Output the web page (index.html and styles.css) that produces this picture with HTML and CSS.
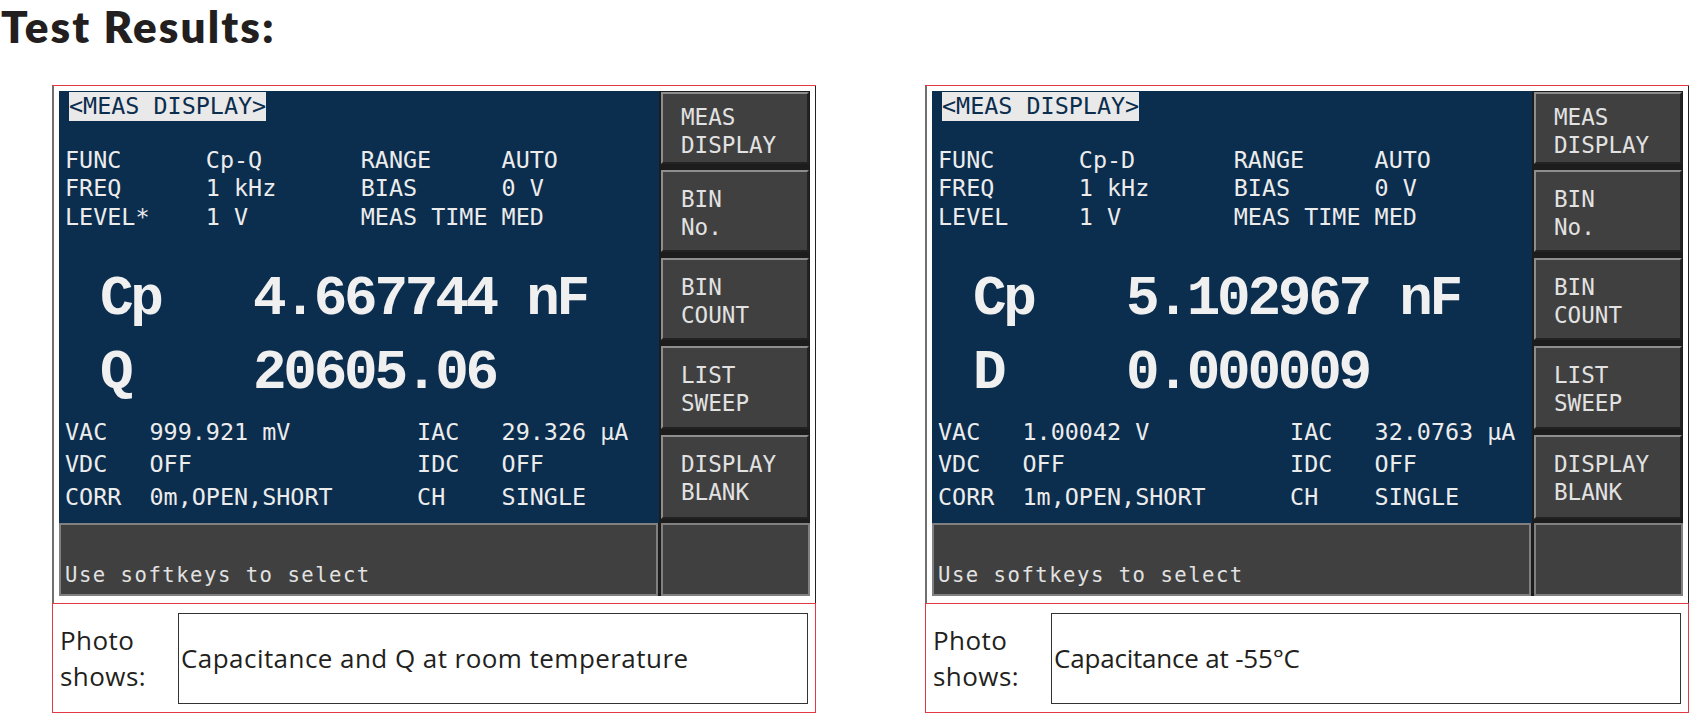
FILE: index.html
```html
<!DOCTYPE html>
<html>
<head>
<meta charset="utf-8">
<link rel="stylesheet" href="styles.css">
</head>
<body>
<h1 class="title">Test Results:</h1>
<div class="panels">
  <div class="panel">
    <div class="shot">
      <div class="screen">
        <div class="top">
          <div class="main">
            <div class="tag">&lt;MEAS DISPLAY&gt;</div>
<pre class="params">FUNC      Cp-Q       RANGE     AUTO
FREQ      1 kHz      BIAS      0 V
LEVEL*    1 V        MEAS TIME MED</pre>
            <div class="big">
              <div class="row"><span class="lbl">Cp</span><span class="val">4.667744 nF</span></div>
              <div class="row"><span class="lbl">Q</span><span class="val">20605.06</span></div>
            </div>
<pre class="info">VAC   999.921 mV         IAC   29.326 µA
VDC   OFF                IDC   OFF
CORR  0m,OPEN,SHORT      CH    SINGLE</pre>
          </div>
          <div class="keys">
            <div class="key">MEAS<br>DISPLAY</div>
            <div class="key">BIN<br>No.</div>
            <div class="key">BIN<br>COUNT</div>
            <div class="key">LIST<br>SWEEP</div>
            <div class="key">DISPLAY<br>BLANK</div>
          </div>
        </div>
        <div class="status">
          <div class="msg">Use softkeys to select</div>
          <div class="cell"></div>
        </div>
      </div>
    </div>
    <div class="caption">
      <div class="label">Photo<br>shows:</div>
      <div class="box">Capacitance and Q at room temperature</div>
    </div>
  </div>

  <div class="panel">
    <div class="shot">
      <div class="screen">
        <div class="top">
          <div class="main">
            <div class="tag">&lt;MEAS DISPLAY&gt;</div>
<pre class="params">FUNC      Cp-D       RANGE     AUTO
FREQ      1 kHz      BIAS      0 V
LEVEL     1 V        MEAS TIME MED</pre>
            <div class="big">
              <div class="row"><span class="lbl">Cp</span><span class="val">5.102967 nF</span></div>
              <div class="row"><span class="lbl">D</span><span class="val">0.000009</span></div>
            </div>
<pre class="info">VAC   1.00042 V          IAC   32.0763 µA
VDC   OFF                IDC   OFF
CORR  1m,OPEN,SHORT      CH    SINGLE</pre>
          </div>
          <div class="keys">
            <div class="key">MEAS<br>DISPLAY</div>
            <div class="key">BIN<br>No.</div>
            <div class="key">BIN<br>COUNT</div>
            <div class="key">LIST<br>SWEEP</div>
            <div class="key">DISPLAY<br>BLANK</div>
          </div>
        </div>
        <div class="status">
          <div class="msg">Use softkeys to select</div>
          <div class="cell"></div>
        </div>
      </div>
    </div>
    <div class="caption">
      <div class="label">Photo<br>shows:</div>
      <div class="box box-short">Capacitance at -55°C</div>
    </div>
  </div>
</div>
</body>
</html>
```

FILE: styles.css
```css
* { box-sizing: border-box; }
html, body { margin: 0; padding: 0; background: #ffffff; }
body { width: 1706px; height: 727px; overflow: hidden; }

.title {
  margin: 0;
  padding-left: 1px;
  height: 52px;
  font: 800 44px/52.8px "Lato", "Open Sans", sans-serif;
  letter-spacing: 2.1px;
  color: #231f20;
}

.panels {
  display: flex;
  gap: 109px;
  padding-left: 52px;
  margin-top: 33px;
}

.panel {
  width: 764px;
  border-top: 1px solid #e23a44;
}

.shot {
  border-left: 2px solid #707070;
  border-right: 1px solid #222222;
  padding: 5px 5px 7px 5px;
}

.screen {
  width: 751px;
  height: 505px;
  display: flex;
  flex-direction: column;
  background: #1c1c1c;
}

.top {
  height: 432px;
  display: flex;
}

.main {
  width: 600px;
  background: #0b2d4e;
  color: #ececec;
  padding: 1px 0 0 6px;
  font-family: "DejaVu Sans Mono", monospace;
}

.tag {
  width: max-content;
  margin-left: 4px;
  background: #e9e9e9;
  color: #0b2d4e;
  font-size: 23.4px;
  line-height: 29px;
}

.params, .info {
  margin: 0;
  font-family: "DejaVu Sans Mono", monospace;
  font-size: 23.4px;
}

.params {
  margin-top: 24.7px;
  line-height: 28.5px;
}

.big {
  margin-top: 30.6px;
  padding-left: 35px;
  font-family: "Liberation Mono", monospace;
  font-weight: 700;
  font-size: 56px;
  line-height: 74.5px;
  letter-spacing: -3.25px;
  color: #f0f0f0;
}

.big .lbl {
  display: inline-block;
  width: 153px;
}

.info {
  margin-top: 4.9px;
  line-height: 32.5px;
}

.keys {
  width: 151px;
  background: #1c1c1c;
  padding: 1px 1px 0 2px;
  display: flex;
  flex-direction: column;
  gap: 6px;
}

.key {
  height: 82px;
  background: #404040;
  border-top: 2px solid #8e8e8e;
  border-left: 2px solid #8e8e8e;
  border-right: 2px solid #222222;
  border-bottom: 2px solid #222222;
  padding: 13px 0 0 18px;
  font-family: "DejaVu Sans Mono", monospace;
  font-size: 22.6px;
  line-height: 28px;
  color: #e2e2e2;
}

.key:first-child { height: 72px; padding-top: 9px; }
.key:nth-child(4) { height: 83px; }
.key:nth-child(5) { height: 84px; }

.status {
  height: 73px;
  display: flex;
  gap: 3px;
  background: #1c1c1c;
}

.msg, .cell {
  background: #404040;
  border: 2px solid #808080;
}

.msg {
  width: 599px;
  padding: 38px 0 0 4px;
  font-family: "DejaVu Sans Mono", monospace;
  font-size: 20.6px;
  line-height: 24px;
  letter-spacing: 1.5px;
  color: #e2e2e2;
}

.cell { flex: 1; }

.caption {
  height: 110px;
  border: 1px solid #e23a44;
  display: flex;
  align-items: center;
  padding: 0 7px 0 7px;
  font-family: "Open Sans", sans-serif;
  font-size: 26px;
  letter-spacing: 0.45px;
  color: #231f20;
}

.label {
  width: 118px;
  line-height: 36px;
}

.box {
  flex: 1;
  height: 91px;
  border: 1.5px solid #333333;
  display: flex;
  align-items: center;
  padding-left: 2px;
  line-height: 30px;
}

.box-short { letter-spacing: -0.2px; }
```
